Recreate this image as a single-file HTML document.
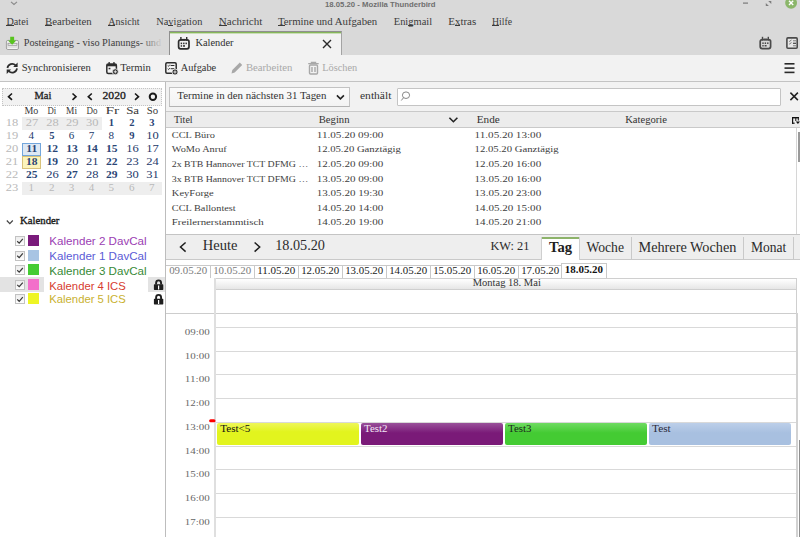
<!DOCTYPE html>
<html><head><meta charset="utf-8"><title>18.05.20 - Mozilla Thunderbird</title>
<style>
html,body{margin:0;padding:0;width:800px;height:537px;overflow:hidden;background:#fff;}
body{position:relative;font-family:"Liberation Serif", serif;}
svg{position:absolute;left:0;top:0;}
</style></head><body>
<div style="position:absolute;left:0px;top:0px;width:800px;height:55px;background:#d9d9d9"></div>
<div style="position:absolute;left:169px;top:31px;width:173px;height:24px;background:#f2f2f2;border-left:1px solid #8f8f8f;border-right:1px solid #a3a3a3;border-top:1px solid #8f8f8f;box-sizing:border-box"></div>
<div style="position:absolute;left:170px;top:32px;width:171px;height:1px;background:#86b65a"></div>
<div style="position:absolute;left:170px;top:33px;width:171px;height:1px;background:#c9ddb6"></div>
<div style="position:absolute;left:0px;top:55px;width:800px;height:27px;background:#f2f2f2"></div>
<div style="position:absolute;left:0px;top:81px;width:800px;height:1px;background:#c3c3c3"></div>
<div style="position:absolute;left:0px;top:82px;width:800px;height:455px;background:#ffffff"></div>
<div style="position:absolute;left:165px;top:82px;width:1px;height:455px;background:#bdbdbd"></div>
<div style="position:absolute;left:166px;top:82px;width:634px;height:29px;background:#f2f2f2"></div>
<div style="position:absolute;left:169px;top:87px;width:181px;height:20px;background:linear-gradient(#fafafa,#f3f3f3);border:1px solid #c2c2c2;border-bottom-color:#b3b3b3;box-sizing:border-box"></div>
<div style="position:absolute;left:397px;top:88px;width:384px;height:18px;background:#fff;border:1px solid #c4c4c4;border-radius:1px;box-sizing:border-box"></div>
<div style="position:absolute;left:166px;top:111px;width:634px;height:17px;background:#ececec;border-top:1px solid #c9c9c9;border-bottom:1px solid #c9c9c9;box-sizing:border-box"></div>
<div style="position:absolute;left:796px;top:128px;width:1px;height:106px;background:#d6d6d6"></div>
<div style="position:absolute;left:798px;top:132px;width:2px;height:30px;background:#9a9a9a"></div>
<div style="position:absolute;left:166px;top:234px;width:634px;height:1px;background:#c4c4c4"></div>
<div style="position:absolute;left:166px;top:235px;width:634px;height:24px;background:#eeeeee"></div>
<div style="position:absolute;left:166px;top:259px;width:634px;height:1px;background:#c9c9c9"></div>
<div style="position:absolute;left:541px;top:237px;width:39px;height:23px;background:#ffffff;border-left:1px solid #cfcfcf;border-right:1px solid #cfcfcf;box-sizing:border-box"></div>
<div style="position:absolute;left:542px;top:237px;width:37px;height:2px;background:#8db36a"></div>
<div style="position:absolute;left:631px;top:237px;width:1px;height:22px;background:#c9c9c9"></div>
<div style="position:absolute;left:743px;top:237px;width:1px;height:22px;background:#c9c9c9"></div>
<div style="position:absolute;left:793px;top:237px;width:1px;height:22px;background:#c9c9c9"></div>
<div style="position:absolute;left:166px;top:265px;width:395px;height:1px;background:#c9c9c9"></div>
<div style="position:absolute;left:210px;top:265px;width:1px;height:13px;background:#c9c9c9"></div>
<div style="position:absolute;left:254px;top:265px;width:1px;height:13px;background:#c9c9c9"></div>
<div style="position:absolute;left:298px;top:265px;width:1px;height:13px;background:#c9c9c9"></div>
<div style="position:absolute;left:342px;top:265px;width:1px;height:13px;background:#c9c9c9"></div>
<div style="position:absolute;left:386px;top:265px;width:1px;height:13px;background:#c9c9c9"></div>
<div style="position:absolute;left:430px;top:265px;width:1px;height:13px;background:#c9c9c9"></div>
<div style="position:absolute;left:474px;top:265px;width:1px;height:13px;background:#c9c9c9"></div>
<div style="position:absolute;left:518px;top:265px;width:1px;height:13px;background:#c9c9c9"></div>
<div style="position:absolute;left:561px;top:263px;width:46px;height:15px;background:#fff;border:1px solid #c9c9c9;border-bottom:none;box-sizing:border-box"></div>
<div style="position:absolute;left:215px;top:278px;width:582px;height:12px;background:linear-gradient(#ffffff,#e6e6e6);border:1px solid #cfcfcf;box-sizing:border-box"></div>
<div style="position:absolute;left:166px;top:313px;width:631px;height:1px;background:#cdcdcd"></div>
<div style="position:absolute;left:796px;top:278px;width:1px;height:259px;background:#cfcfcf"></div>
<div style="position:absolute;left:796px;top:313px;width:2px;height:224px;background:#d2d2d2"></div>
<div style="position:absolute;left:798px;top:313px;width:2px;height:224px;background:#ffffff"></div>
<div style="position:absolute;left:799px;top:440px;width:1px;height:97px;background:#8f8f8f"></div>
<div style="position:absolute;left:214px;top:278px;width:2px;height:259px;background:#dfdfdf"></div>
<div style="position:absolute;left:216px;top:327px;width:580px;height:1px;background:#d9d9d9"></div>
<div style="position:absolute;left:216px;top:351px;width:580px;height:1px;background:#d9d9d9"></div>
<div style="position:absolute;left:216px;top:374px;width:580px;height:1px;background:#d9d9d9"></div>
<div style="position:absolute;left:216px;top:398px;width:580px;height:1px;background:#d9d9d9"></div>
<div style="position:absolute;left:216px;top:422px;width:580px;height:1px;background:#d9d9d9"></div>
<div style="position:absolute;left:216px;top:446px;width:580px;height:1px;background:#d9d9d9"></div>
<div style="position:absolute;left:216px;top:469px;width:580px;height:1px;background:#d9d9d9"></div>
<div style="position:absolute;left:216px;top:493px;width:580px;height:1px;background:#d9d9d9"></div>
<div style="position:absolute;left:216px;top:517px;width:580px;height:1px;background:#d9d9d9"></div>
<div style="position:absolute;left:217px;top:423px;width:142px;height:22px;background:linear-gradient(#eef65a,#e2f41e 40%,#e2f41e);border-radius:2px"></div>
<div style="position:absolute;left:361px;top:423px;width:142px;height:22px;background:linear-gradient(#99519a,#7a1a78 45%,#7a1a78);border-radius:2px"></div>
<div style="position:absolute;left:505px;top:423px;width:142px;height:22px;background:linear-gradient(#6fdb62,#44cb33 45%,#44cb33);border-radius:2px"></div>
<div style="position:absolute;left:649px;top:423px;width:142px;height:22px;background:linear-gradient(#bccfe9,#a8c0e0 45%,#a8c0e0);border-radius:2px"></div>
<div style="position:absolute;left:2px;top:88px;width:160px;height:18px;background:#f2f2f2;border:1px dotted #c4c4c4;box-sizing:border-box"></div>
<div style="position:absolute;left:22px;top:117px;width:80px;height:13px;background:#eeeeee"></div>
<div style="position:absolute;left:22px;top:182px;width:140px;height:13px;background:#eeeeee"></div>
<div style="position:absolute;left:22px;top:143px;width:19px;height:13px;background:#dde8f4;border:1px solid #72a6dc;box-sizing:border-box"></div>
<div style="position:absolute;left:22px;top:156px;width:19px;height:13px;background:#fcf4bb;border:1px solid #d9c27a;box-sizing:border-box"></div>
<div style="position:absolute;left:0px;top:277px;width:44px;height:15px;background:#e3e3e3"></div>
<div style="position:absolute;left:148px;top:277px;width:17px;height:15px;background:#e3e3e3"></div>
<div style="position:absolute;left:15px;top:236px;width:10px;height:10px;background:linear-gradient(#ededed,#fdfdfd);border:1px solid #c2c2c2;box-sizing:border-box"></div>
<div style="position:absolute;left:28px;top:235px;width:11px;height:11px;background:#7a1a7b"></div>
<div style="position:absolute;left:15px;top:251px;width:10px;height:10px;background:linear-gradient(#ededed,#fdfdfd);border:1px solid #c2c2c2;box-sizing:border-box"></div>
<div style="position:absolute;left:28px;top:250px;width:11px;height:11px;background:#a8c4e3"></div>
<div style="position:absolute;left:15px;top:265px;width:10px;height:10px;background:linear-gradient(#ededed,#fdfdfd);border:1px solid #c2c2c2;box-sizing:border-box"></div>
<div style="position:absolute;left:28px;top:264px;width:11px;height:11px;background:#44cc33"></div>
<div style="position:absolute;left:15px;top:280px;width:10px;height:10px;background:linear-gradient(#ededed,#fdfdfd);border:1px solid #c2c2c2;box-sizing:border-box"></div>
<div style="position:absolute;left:28px;top:279px;width:11px;height:11px;background:#f36fca"></div>
<div style="position:absolute;left:15px;top:294px;width:10px;height:10px;background:linear-gradient(#ededed,#fdfdfd);border:1px solid #c2c2c2;box-sizing:border-box"></div>
<div style="position:absolute;left:28px;top:293px;width:11px;height:11px;background:#eef524"></div>
<div style="position:absolute;left:6px;top:25px;width:8px;height:1px;background:#3b3b3b"></div>
<div style="position:absolute;left:45px;top:25px;width:7px;height:1px;background:#3b3b3b"></div>
<div style="position:absolute;left:108px;top:25px;width:7px;height:1px;background:#3b3b3b"></div>
<div style="position:absolute;left:168px;top:25px;width:5px;height:1px;background:#3b3b3b"></div>
<div style="position:absolute;left:219px;top:25px;width:8px;height:1px;background:#3b3b3b"></div>
<div style="position:absolute;left:278px;top:25px;width:7px;height:1px;background:#3b3b3b"></div>
<div style="position:absolute;left:408px;top:25px;width:5px;height:1px;background:#3b3b3b"></div>
<div style="position:absolute;left:455px;top:25px;width:5px;height:1px;background:#3b3b3b"></div>
<div style="position:absolute;left:492px;top:25px;width:7px;height:1px;background:#3b3b3b"></div>
<svg width="800" height="537" viewBox="0 0 800 537">
<defs><linearGradient id="fade" gradientUnits="userSpaceOnUse" x1="140" y1="0" x2="163" y2="0"><stop offset="0" stop-color="#3a3a3a"/><stop offset="1" stop-color="#3a3a3a" stop-opacity="0"/></linearGradient></defs>
<text x="325.00" y="7.00" font-family='"Liberation Sans", sans-serif' font-size="7.92" font-weight="bold" fill="#6f6f6f" textLength="110.62" lengthAdjust="spacingAndGlyphs" >18.05.20 - Mozilla Thunderbird</text>
<text x="6.50" y="24.60" font-family='"Liberation Serif", serif' font-size="9.61" font-weight="normal" fill="#3b3b3b" textLength="21.98" lengthAdjust="spacingAndGlyphs" >Datei</text>
<text x="45.00" y="24.60" font-family='"Liberation Serif", serif' font-size="9.77" font-weight="normal" fill="#3b3b3b" textLength="46.69" lengthAdjust="spacingAndGlyphs" >Bearbeiten</text>
<text x="108.25" y="24.60" font-family='"Liberation Serif", serif' font-size="9.59" font-weight="normal" fill="#3b3b3b" textLength="31.19" lengthAdjust="spacingAndGlyphs" >Ansicht</text>
<text x="156.25" y="24.60" font-family='"Liberation Serif", serif' font-size="9.67" font-weight="normal" fill="#3b3b3b" textLength="46.06" lengthAdjust="spacingAndGlyphs" >Navigation</text>
<text x="218.75" y="24.60" font-family='"Liberation Serif", serif' font-size="9.83" font-weight="normal" fill="#3b3b3b" textLength="43.54" lengthAdjust="spacingAndGlyphs" >Nachricht</text>
<text x="278.00" y="24.60" font-family='"Liberation Serif", serif' font-size="9.78" font-weight="normal" fill="#3b3b3b" textLength="99.21" lengthAdjust="spacingAndGlyphs" >Termine und Aufgaben</text>
<text x="393.75" y="24.60" font-family='"Liberation Serif", serif' font-size="9.69" font-weight="normal" fill="#3b3b3b" textLength="38.35" lengthAdjust="spacingAndGlyphs" >Enigmail</text>
<text x="448.25" y="24.60" font-family='"Liberation Serif", serif' font-size="9.79" font-weight="normal" fill="#3b3b3b" textLength="27.99" lengthAdjust="spacingAndGlyphs" >Extras</text>
<text x="492.00" y="24.60" font-family='"Liberation Serif", serif' font-size="9.53" font-weight="normal" fill="#3b3b3b" textLength="20.10" lengthAdjust="spacingAndGlyphs" >Hilfe</text>
<text x="23.75" y="45.60" font-family='"Liberation Serif", serif' font-size="10.12" font-weight="normal" fill="url(#fade)" textLength="137.30" lengthAdjust="spacingAndGlyphs" >Posteingang - viso Planungs- und</text>
<text x="195.40" y="46.00" font-family='"Liberation Serif", serif' font-size="10.62" font-weight="normal" fill="#2e2e2e" textLength="38.09" lengthAdjust="spacingAndGlyphs" >Kalender</text>
<text x="21.70" y="71.00" font-family='"Liberation Serif", serif' font-size="10.44" font-weight="normal" fill="#303030" textLength="69.08" lengthAdjust="spacingAndGlyphs" >Synchronisieren</text>
<text x="120.20" y="71.00" font-family='"Liberation Serif", serif' font-size="10.44" font-weight="normal" fill="#303030" textLength="30.59" lengthAdjust="spacingAndGlyphs" >Termin</text>
<text x="180.70" y="71.00" font-family='"Liberation Serif", serif' font-size="10.36" font-weight="normal" fill="#303030" textLength="35.47" lengthAdjust="spacingAndGlyphs" >Aufgabe</text>
<text x="245.90" y="71.00" font-family='"Liberation Serif", serif' font-size="10.46" font-weight="normal" fill="#a9a9a9" textLength="46.41" lengthAdjust="spacingAndGlyphs" >Bearbeiten</text>
<text x="322.20" y="71.00" font-family='"Liberation Serif", serif' font-size="10.38" font-weight="normal" fill="#a9a9a9" textLength="35.09" lengthAdjust="spacingAndGlyphs" >Löschen</text>
<text x="34.50" y="98.80" font-family='"Liberation Serif", serif' font-size="9.77" font-weight="normal" fill="#1e1e1e" textLength="16.88" lengthAdjust="spacingAndGlyphs" stroke="#1e1e1e" stroke-width="0.3">Mai</text>
<text x="102.50" y="98.80" font-family='"Liberation Serif", serif' font-size="10.03" font-weight="normal" fill="#1e1e1e" textLength="23.32" lengthAdjust="spacingAndGlyphs" stroke="#1e1e1e" stroke-width="0.3">2020</text>
<text x="24.50" y="113.50" font-family='"Liberation Serif", serif' font-size="9.47" font-weight="normal" fill="#3a3a3a" textLength="13.85" lengthAdjust="spacingAndGlyphs" >Mo</text>
<text x="47.40" y="113.50" font-family='"Liberation Serif", serif' font-size="9.47" font-weight="normal" fill="#3a3a3a" textLength="8.73" lengthAdjust="spacingAndGlyphs" >Di</text>
<text x="66.10" y="113.50" font-family='"Liberation Serif", serif' font-size="9.47" font-weight="normal" fill="#3a3a3a" textLength="10.95" lengthAdjust="spacingAndGlyphs" >Mi</text>
<text x="86.50" y="113.50" font-family='"Liberation Serif", serif' font-size="9.47" font-weight="normal" fill="#3a3a3a" textLength="11.03" lengthAdjust="spacingAndGlyphs" >Do</text>
<text x="105.50" y="113.50" font-family='"Liberation Serif", serif' font-size="9.47" font-weight="normal" fill="#3a3a3a" textLength="13.79" lengthAdjust="spacingAndGlyphs" >Fr</text>
<text x="126.20" y="113.50" font-family='"Liberation Serif", serif' font-size="9.47" font-weight="normal" fill="#3a3a3a" textLength="12.93" lengthAdjust="spacingAndGlyphs" >Sa</text>
<text x="146.80" y="113.50" font-family='"Liberation Serif", serif' font-size="9.47" font-weight="normal" fill="#3a3a3a" textLength="11.41" lengthAdjust="spacingAndGlyphs" >So</text>
<text x="5.67" y="125.70" font-family='"Liberation Serif", serif' font-size="9.62" font-weight="normal" fill="#b9b9b9" textLength="12.50" lengthAdjust="spacingAndGlyphs" >18</text>
<text x="25.77" y="125.70" font-family='"Liberation Serif", serif' font-size="9.62" font-weight="normal" fill="#b9b9b9" textLength="12.50" lengthAdjust="spacingAndGlyphs" >27</text>
<text x="46.27" y="125.70" font-family='"Liberation Serif", serif' font-size="9.62" font-weight="normal" fill="#b9b9b9" textLength="12.50" lengthAdjust="spacingAndGlyphs" >28</text>
<text x="65.97" y="125.70" font-family='"Liberation Serif", serif' font-size="9.62" font-weight="normal" fill="#b9b9b9" textLength="12.50" lengthAdjust="spacingAndGlyphs" >29</text>
<text x="86.07" y="125.70" font-family='"Liberation Serif", serif' font-size="9.62" font-weight="normal" fill="#b9b9b9" textLength="12.50" lengthAdjust="spacingAndGlyphs" >30</text>
<text x="108.65" y="125.70" font-family='"Liberation Serif", serif' font-size="9.62" font-weight="bold" fill="#2a4576" textLength="5.29" lengthAdjust="spacingAndGlyphs" >1</text>
<text x="129.15" y="125.70" font-family='"Liberation Serif", serif' font-size="9.62" font-weight="bold" fill="#2a4576" textLength="5.29" lengthAdjust="spacingAndGlyphs" >2</text>
<text x="149.25" y="125.70" font-family='"Liberation Serif", serif' font-size="9.62" font-weight="bold" fill="#2a4576" textLength="5.29" lengthAdjust="spacingAndGlyphs" >3</text>
<text x="5.67" y="138.75" font-family='"Liberation Serif", serif' font-size="9.62" font-weight="normal" fill="#b9b9b9" textLength="12.50" lengthAdjust="spacingAndGlyphs" >19</text>
<text x="28.53" y="138.75" font-family='"Liberation Serif", serif' font-size="9.62" font-weight="normal" fill="#23386a" textLength="5.53" lengthAdjust="spacingAndGlyphs" >4</text>
<text x="49.15" y="138.75" font-family='"Liberation Serif", serif' font-size="9.62" font-weight="bold" fill="#2a4576" textLength="5.29" lengthAdjust="spacingAndGlyphs" >5</text>
<text x="68.73" y="138.75" font-family='"Liberation Serif", serif' font-size="9.62" font-weight="normal" fill="#23386a" textLength="5.53" lengthAdjust="spacingAndGlyphs" >6</text>
<text x="88.83" y="138.75" font-family='"Liberation Serif", serif' font-size="9.62" font-weight="normal" fill="#23386a" textLength="5.53" lengthAdjust="spacingAndGlyphs" >7</text>
<text x="108.53" y="138.75" font-family='"Liberation Serif", serif' font-size="9.62" font-weight="normal" fill="#23386a" textLength="5.53" lengthAdjust="spacingAndGlyphs" >8</text>
<text x="129.15" y="138.75" font-family='"Liberation Serif", serif' font-size="9.62" font-weight="bold" fill="#2a4576" textLength="5.29" lengthAdjust="spacingAndGlyphs" >9</text>
<text x="146.37" y="138.75" font-family='"Liberation Serif", serif' font-size="9.62" font-weight="normal" fill="#23386a" textLength="12.50" lengthAdjust="spacingAndGlyphs" >10</text>
<text x="5.67" y="151.80" font-family='"Liberation Serif", serif' font-size="9.62" font-weight="normal" fill="#b9b9b9" textLength="12.50" lengthAdjust="spacingAndGlyphs" >20</text>
<text x="26.30" y="151.80" font-family='"Liberation Serif", serif' font-size="9.62" font-weight="bold" fill="#2a4576" textLength="10.91" lengthAdjust="spacingAndGlyphs" >11</text>
<text x="46.51" y="151.80" font-family='"Liberation Serif", serif' font-size="9.62" font-weight="bold" fill="#2a4576" textLength="11.54" lengthAdjust="spacingAndGlyphs" >12</text>
<text x="66.21" y="151.80" font-family='"Liberation Serif", serif' font-size="9.62" font-weight="bold" fill="#2a4576" textLength="11.54" lengthAdjust="spacingAndGlyphs" >13</text>
<text x="86.31" y="151.80" font-family='"Liberation Serif", serif' font-size="9.62" font-weight="bold" fill="#2a4576" textLength="11.54" lengthAdjust="spacingAndGlyphs" >14</text>
<text x="106.01" y="151.80" font-family='"Liberation Serif", serif' font-size="9.62" font-weight="bold" fill="#2a4576" textLength="11.54" lengthAdjust="spacingAndGlyphs" >15</text>
<text x="126.27" y="151.80" font-family='"Liberation Serif", serif' font-size="9.62" font-weight="normal" fill="#23386a" textLength="12.50" lengthAdjust="spacingAndGlyphs" >16</text>
<text x="146.37" y="151.80" font-family='"Liberation Serif", serif' font-size="9.62" font-weight="normal" fill="#23386a" textLength="12.50" lengthAdjust="spacingAndGlyphs" >17</text>
<text x="5.67" y="164.85" font-family='"Liberation Serif", serif' font-size="9.62" font-weight="normal" fill="#b9b9b9" textLength="12.50" lengthAdjust="spacingAndGlyphs" >21</text>
<text x="26.01" y="164.85" font-family='"Liberation Serif", serif' font-size="9.62" font-weight="bold" fill="#2a4576" textLength="11.54" lengthAdjust="spacingAndGlyphs" >18</text>
<text x="46.51" y="164.85" font-family='"Liberation Serif", serif' font-size="9.62" font-weight="bold" fill="#2a4576" textLength="11.54" lengthAdjust="spacingAndGlyphs" >19</text>
<text x="65.97" y="164.85" font-family='"Liberation Serif", serif' font-size="9.62" font-weight="normal" fill="#23386a" textLength="12.50" lengthAdjust="spacingAndGlyphs" >20</text>
<text x="86.07" y="164.85" font-family='"Liberation Serif", serif' font-size="9.62" font-weight="normal" fill="#23386a" textLength="12.50" lengthAdjust="spacingAndGlyphs" >21</text>
<text x="106.01" y="164.85" font-family='"Liberation Serif", serif' font-size="9.62" font-weight="bold" fill="#2a4576" textLength="11.54" lengthAdjust="spacingAndGlyphs" >22</text>
<text x="126.27" y="164.85" font-family='"Liberation Serif", serif' font-size="9.62" font-weight="normal" fill="#23386a" textLength="12.50" lengthAdjust="spacingAndGlyphs" >23</text>
<text x="146.37" y="164.85" font-family='"Liberation Serif", serif' font-size="9.62" font-weight="normal" fill="#23386a" textLength="12.50" lengthAdjust="spacingAndGlyphs" >24</text>
<text x="5.67" y="177.90" font-family='"Liberation Serif", serif' font-size="9.62" font-weight="normal" fill="#b9b9b9" textLength="12.50" lengthAdjust="spacingAndGlyphs" >22</text>
<text x="26.01" y="177.90" font-family='"Liberation Serif", serif' font-size="9.62" font-weight="bold" fill="#2a4576" textLength="11.54" lengthAdjust="spacingAndGlyphs" >25</text>
<text x="46.27" y="177.90" font-family='"Liberation Serif", serif' font-size="9.62" font-weight="normal" fill="#23386a" textLength="12.50" lengthAdjust="spacingAndGlyphs" >26</text>
<text x="66.21" y="177.90" font-family='"Liberation Serif", serif' font-size="9.62" font-weight="bold" fill="#2a4576" textLength="11.54" lengthAdjust="spacingAndGlyphs" >27</text>
<text x="86.07" y="177.90" font-family='"Liberation Serif", serif' font-size="9.62" font-weight="normal" fill="#23386a" textLength="12.50" lengthAdjust="spacingAndGlyphs" >28</text>
<text x="106.01" y="177.90" font-family='"Liberation Serif", serif' font-size="9.62" font-weight="bold" fill="#2a4576" textLength="11.54" lengthAdjust="spacingAndGlyphs" >29</text>
<text x="126.27" y="177.90" font-family='"Liberation Serif", serif' font-size="9.62" font-weight="normal" fill="#23386a" textLength="12.50" lengthAdjust="spacingAndGlyphs" >30</text>
<text x="146.37" y="177.90" font-family='"Liberation Serif", serif' font-size="9.62" font-weight="normal" fill="#23386a" textLength="12.50" lengthAdjust="spacingAndGlyphs" >31</text>
<text x="5.67" y="190.95" font-family='"Liberation Serif", serif' font-size="9.62" font-weight="normal" fill="#b9b9b9" textLength="12.50" lengthAdjust="spacingAndGlyphs" >23</text>
<text x="28.53" y="190.95" font-family='"Liberation Serif", serif' font-size="9.62" font-weight="normal" fill="#b9b9b9" textLength="5.53" lengthAdjust="spacingAndGlyphs" >1</text>
<text x="49.03" y="190.95" font-family='"Liberation Serif", serif' font-size="9.62" font-weight="normal" fill="#b9b9b9" textLength="5.53" lengthAdjust="spacingAndGlyphs" >2</text>
<text x="68.73" y="190.95" font-family='"Liberation Serif", serif' font-size="9.62" font-weight="normal" fill="#b9b9b9" textLength="5.53" lengthAdjust="spacingAndGlyphs" >3</text>
<text x="88.83" y="190.95" font-family='"Liberation Serif", serif' font-size="9.62" font-weight="normal" fill="#b9b9b9" textLength="5.53" lengthAdjust="spacingAndGlyphs" >4</text>
<text x="108.53" y="190.95" font-family='"Liberation Serif", serif' font-size="9.62" font-weight="normal" fill="#b9b9b9" textLength="5.53" lengthAdjust="spacingAndGlyphs" >5</text>
<text x="129.03" y="190.95" font-family='"Liberation Serif", serif' font-size="9.62" font-weight="normal" fill="#b9b9b9" textLength="5.53" lengthAdjust="spacingAndGlyphs" >6</text>
<text x="149.13" y="190.95" font-family='"Liberation Serif", serif' font-size="9.62" font-weight="normal" fill="#b9b9b9" textLength="5.53" lengthAdjust="spacingAndGlyphs" >7</text>
<text x="20.10" y="223.60" font-family='"Liberation Serif", serif' font-size="10.34" font-weight="normal" fill="#1a1a1a" textLength="39.27" lengthAdjust="spacingAndGlyphs" stroke="#1a1a1a" stroke-width="0.35">Kalender</text>
<text x="49.30" y="244.70" font-family='"Liberation Sans", sans-serif' font-size="10.93" font-weight="normal" fill="#9b3db3" textLength="97.32" lengthAdjust="spacingAndGlyphs" >Kalender 2 DavCal</text>
<text x="49.30" y="259.60" font-family='"Liberation Sans", sans-serif' font-size="10.93" font-weight="normal" fill="#5b5bd6" textLength="97.32" lengthAdjust="spacingAndGlyphs" >Kalender 1 DavCal</text>
<text x="49.30" y="274.60" font-family='"Liberation Sans", sans-serif' font-size="10.93" font-weight="normal" fill="#378a37" textLength="97.32" lengthAdjust="spacingAndGlyphs" >Kalender 3 DavCal</text>
<text x="49.30" y="289.60" font-family='"Liberation Sans", sans-serif' font-size="10.86" font-weight="normal" fill="#d63b2f" textLength="76.50" lengthAdjust="spacingAndGlyphs" >Kalender 4 ICS</text>
<text x="49.30" y="302.70" font-family='"Liberation Sans", sans-serif' font-size="10.86" font-weight="normal" fill="#c9b12f" textLength="76.50" lengthAdjust="spacingAndGlyphs" >Kalender 5 ICS</text>
<text x="177.30" y="98.80" font-family='"Liberation Serif", serif' font-size="9.93" font-weight="normal" fill="#333" textLength="149.11" lengthAdjust="spacingAndGlyphs" >Termine in den nächsten 31 Tagen</text>
<text x="360.00" y="98.80" font-family='"Liberation Serif", serif' font-size="10.04" font-weight="normal" fill="#333" textLength="31.38" lengthAdjust="spacingAndGlyphs" >enthält</text>
<text x="174.00" y="122.80" font-family='"Liberation Serif", serif' font-size="9.95" font-weight="normal" fill="#333" textLength="18.64" lengthAdjust="spacingAndGlyphs" >Titel</text>
<text x="318.75" y="122.80" font-family='"Liberation Serif", serif' font-size="10.08" font-weight="normal" fill="#333" textLength="30.77" lengthAdjust="spacingAndGlyphs" >Beginn</text>
<text x="476.75" y="122.80" font-family='"Liberation Serif", serif' font-size="10.18" font-weight="normal" fill="#333" textLength="23.02" lengthAdjust="spacingAndGlyphs" >Ende</text>
<text x="625.20" y="122.80" font-family='"Liberation Serif", serif' font-size="10.08" font-weight="normal" fill="#333" textLength="41.84" lengthAdjust="spacingAndGlyphs" >Kategorie</text>
<text x="171.80" y="137.70" font-family='"Liberation Serif", serif' font-size="9.01" font-weight="normal" fill="#3d3d3d" textLength="43.10" lengthAdjust="spacingAndGlyphs" >CCL Büro</text>
<text x="316.80" y="137.70" font-family='"Liberation Serif", serif' font-size="9.01" font-weight="normal" fill="#3d3d3d" textLength="66.60" lengthAdjust="spacingAndGlyphs" >11.05.20 09:00</text>
<text x="474.60" y="137.70" font-family='"Liberation Serif", serif' font-size="9.01" font-weight="normal" fill="#3d3d3d" textLength="66.60" lengthAdjust="spacingAndGlyphs" >11.05.20 13:00</text>
<text x="171.80" y="152.32" font-family='"Liberation Serif", serif' font-size="9.01" font-weight="normal" fill="#3d3d3d" textLength="54.98" lengthAdjust="spacingAndGlyphs" >WoMo Anruf</text>
<text x="316.80" y="152.32" font-family='"Liberation Serif", serif' font-size="9.01" font-weight="normal" fill="#3d3d3d" textLength="84.04" lengthAdjust="spacingAndGlyphs" >12.05.20 Ganztägig</text>
<text x="474.60" y="152.32" font-family='"Liberation Serif", serif' font-size="9.01" font-weight="normal" fill="#3d3d3d" textLength="84.04" lengthAdjust="spacingAndGlyphs" >12.05.20 Ganztägig</text>
<text x="171.80" y="166.94" font-family='"Liberation Serif", serif' font-size="9.01" font-weight="normal" fill="#3d3d3d" textLength="136.44" lengthAdjust="spacingAndGlyphs" >2x BTB Hannover TCT DFMG …</text>
<text x="316.80" y="166.94" font-family='"Liberation Serif", serif' font-size="9.01" font-weight="normal" fill="#3d3d3d" textLength="66.58" lengthAdjust="spacingAndGlyphs" >12.05.20 09:00</text>
<text x="474.60" y="166.94" font-family='"Liberation Serif", serif' font-size="9.01" font-weight="normal" fill="#3d3d3d" textLength="66.58" lengthAdjust="spacingAndGlyphs" >12.05.20 16:00</text>
<text x="171.80" y="181.56" font-family='"Liberation Serif", serif' font-size="9.01" font-weight="normal" fill="#3d3d3d" textLength="136.44" lengthAdjust="spacingAndGlyphs" >3x BTB Hannover TCT DFMG …</text>
<text x="316.80" y="181.56" font-family='"Liberation Serif", serif' font-size="9.01" font-weight="normal" fill="#3d3d3d" textLength="66.58" lengthAdjust="spacingAndGlyphs" >13.05.20 09:00</text>
<text x="474.60" y="181.56" font-family='"Liberation Serif", serif' font-size="9.01" font-weight="normal" fill="#3d3d3d" textLength="66.58" lengthAdjust="spacingAndGlyphs" >13.05.20 16:00</text>
<text x="171.80" y="196.18" font-family='"Liberation Serif", serif' font-size="9.01" font-weight="normal" fill="#3d3d3d" textLength="41.96" lengthAdjust="spacingAndGlyphs" >KeyForge</text>
<text x="316.80" y="196.18" font-family='"Liberation Serif", serif' font-size="9.01" font-weight="normal" fill="#3d3d3d" textLength="66.58" lengthAdjust="spacingAndGlyphs" >13.05.20 19:30</text>
<text x="474.60" y="196.18" font-family='"Liberation Serif", serif' font-size="9.01" font-weight="normal" fill="#3d3d3d" textLength="66.58" lengthAdjust="spacingAndGlyphs" >13.05.20 23:00</text>
<text x="171.80" y="210.80" font-family='"Liberation Serif", serif' font-size="9.01" font-weight="normal" fill="#3d3d3d" textLength="63.86" lengthAdjust="spacingAndGlyphs" >CCL Ballontest</text>
<text x="316.80" y="210.80" font-family='"Liberation Serif", serif' font-size="9.01" font-weight="normal" fill="#3d3d3d" textLength="66.58" lengthAdjust="spacingAndGlyphs" >14.05.20 14:00</text>
<text x="474.60" y="210.80" font-family='"Liberation Serif", serif' font-size="9.01" font-weight="normal" fill="#3d3d3d" textLength="66.58" lengthAdjust="spacingAndGlyphs" >14.05.20 15:00</text>
<text x="171.80" y="225.42" font-family='"Liberation Serif", serif' font-size="9.01" font-weight="normal" fill="#3d3d3d" textLength="91.97" lengthAdjust="spacingAndGlyphs" >Freilernerstammtisch</text>
<text x="316.80" y="225.42" font-family='"Liberation Serif", serif' font-size="9.01" font-weight="normal" fill="#3d3d3d" textLength="66.58" lengthAdjust="spacingAndGlyphs" >14.05.20 19:00</text>
<text x="474.60" y="225.42" font-family='"Liberation Serif", serif' font-size="9.01" font-weight="normal" fill="#3d3d3d" textLength="66.58" lengthAdjust="spacingAndGlyphs" >14.05.20 21:00</text>
<text x="202.80" y="250.00" font-family='"Liberation Serif", serif' font-size="13.91" font-weight="normal" fill="#2b2b2b" textLength="34.69" lengthAdjust="spacingAndGlyphs" >Heute</text>
<text x="275.20" y="250.00" font-family='"Liberation Serif", serif' font-size="13.85" font-weight="normal" fill="#2b2b2b" textLength="49.76" lengthAdjust="spacingAndGlyphs" >18.05.20</text>
<text x="490.40" y="250.00" font-family='"Liberation Serif", serif' font-size="13.44" font-weight="normal" fill="#2b2b2b" textLength="39.03" lengthAdjust="spacingAndGlyphs" >KW: 21</text>
<text x="549.00" y="252.00" font-family='"Liberation Serif", serif' font-size="13.89" font-weight="bold" fill="#1e1e1e" textLength="22.96" lengthAdjust="spacingAndGlyphs" >Tag</text>
<text x="586.40" y="252.00" font-family='"Liberation Serif", serif' font-size="13.72" font-weight="normal" fill="#2b2b2b" textLength="37.57" lengthAdjust="spacingAndGlyphs" >Woche</text>
<text x="638.50" y="252.00" font-family='"Liberation Serif", serif' font-size="13.86" font-weight="normal" fill="#2b2b2b" textLength="97.89" lengthAdjust="spacingAndGlyphs" >Mehrere Wochen</text>
<text x="751.00" y="252.00" font-family='"Liberation Serif", serif' font-size="13.69" font-weight="normal" fill="#2b2b2b" textLength="35.31" lengthAdjust="spacingAndGlyphs" >Monat</text>
<text x="169.20" y="274.00" font-family='"Liberation Serif", serif' font-size="10.73" font-weight="normal" fill="#7c7c7c" textLength="38.06" lengthAdjust="spacingAndGlyphs" >09.05.20</text>
<text x="213.20" y="274.00" font-family='"Liberation Serif", serif' font-size="10.73" font-weight="normal" fill="#7c7c7c" textLength="38.06" lengthAdjust="spacingAndGlyphs" >10.05.20</text>
<text x="257.20" y="274.00" font-family='"Liberation Serif", serif' font-size="10.76" font-weight="normal" fill="#222" textLength="38.10" lengthAdjust="spacingAndGlyphs" >11.05.20</text>
<text x="301.20" y="274.00" font-family='"Liberation Serif", serif' font-size="10.73" font-weight="normal" fill="#222" textLength="38.06" lengthAdjust="spacingAndGlyphs" >12.05.20</text>
<text x="345.20" y="274.00" font-family='"Liberation Serif", serif' font-size="10.73" font-weight="normal" fill="#222" textLength="38.06" lengthAdjust="spacingAndGlyphs" >13.05.20</text>
<text x="389.20" y="274.00" font-family='"Liberation Serif", serif' font-size="10.73" font-weight="normal" fill="#222" textLength="38.06" lengthAdjust="spacingAndGlyphs" >14.05.20</text>
<text x="433.20" y="274.00" font-family='"Liberation Serif", serif' font-size="10.73" font-weight="normal" fill="#222" textLength="38.06" lengthAdjust="spacingAndGlyphs" >15.05.20</text>
<text x="477.20" y="274.00" font-family='"Liberation Serif", serif' font-size="10.73" font-weight="normal" fill="#222" textLength="38.06" lengthAdjust="spacingAndGlyphs" >16.05.20</text>
<text x="521.20" y="274.00" font-family='"Liberation Serif", serif' font-size="10.73" font-weight="normal" fill="#222" textLength="38.06" lengthAdjust="spacingAndGlyphs" >17.05.20</text>
<text x="564.70" y="273.00" font-family='"Liberation Serif", serif' font-size="10.75" font-weight="bold" fill="#111" textLength="38.40" lengthAdjust="spacingAndGlyphs" >18.05.20</text>
<text x="472.70" y="285.80" font-family='"Liberation Serif", serif' font-size="10.18" font-weight="normal" fill="#333" textLength="68.16" lengthAdjust="spacingAndGlyphs" >Montag 18. Mai</text>
<text x="184.80" y="335.30" font-family='"Liberation Serif", serif' font-size="9.01" font-weight="normal" fill="#666666" textLength="24.99" lengthAdjust="spacingAndGlyphs" >09:00</text>
<text x="184.80" y="359.30" font-family='"Liberation Serif", serif' font-size="9.01" font-weight="normal" fill="#666666" textLength="24.99" lengthAdjust="spacingAndGlyphs" >10:00</text>
<text x="184.80" y="382.30" font-family='"Liberation Serif", serif' font-size="9.01" font-weight="normal" fill="#666666" textLength="25.08" lengthAdjust="spacingAndGlyphs" >11:00</text>
<text x="184.80" y="406.30" font-family='"Liberation Serif", serif' font-size="9.01" font-weight="normal" fill="#666666" textLength="24.99" lengthAdjust="spacingAndGlyphs" >12:00</text>
<text x="184.80" y="430.30" font-family='"Liberation Serif", serif' font-size="9.01" font-weight="normal" fill="#666666" textLength="24.99" lengthAdjust="spacingAndGlyphs" >13:00</text>
<text x="184.80" y="454.30" font-family='"Liberation Serif", serif' font-size="9.01" font-weight="normal" fill="#666666" textLength="24.99" lengthAdjust="spacingAndGlyphs" >14:00</text>
<text x="184.80" y="477.30" font-family='"Liberation Serif", serif' font-size="9.01" font-weight="normal" fill="#666666" textLength="24.99" lengthAdjust="spacingAndGlyphs" >15:00</text>
<text x="184.80" y="501.30" font-family='"Liberation Serif", serif' font-size="9.01" font-weight="normal" fill="#666666" textLength="24.99" lengthAdjust="spacingAndGlyphs" >16:00</text>
<text x="184.80" y="525.30" font-family='"Liberation Serif", serif' font-size="9.01" font-weight="normal" fill="#666666" textLength="24.99" lengthAdjust="spacingAndGlyphs" >17:00</text>
<text x="220.30" y="431.75" font-family='"Liberation Serif", serif' font-size="9.58" font-weight="normal" fill="#111" textLength="30.08" lengthAdjust="spacingAndGlyphs" >Test&lt;5</text>
<text x="364.00" y="431.75" font-family='"Liberation Serif", serif' font-size="9.53" font-weight="normal" fill="#f3e6f6" textLength="23.50" lengthAdjust="spacingAndGlyphs" >Test2</text>
<text x="508.10" y="431.75" font-family='"Liberation Serif", serif' font-size="9.52" font-weight="normal" fill="#1a2a1a" textLength="23.38" lengthAdjust="spacingAndGlyphs" >Test3</text>
<text x="652.00" y="431.75" font-family='"Liberation Serif", serif' font-size="9.59" font-weight="normal" fill="#2a2a3a" textLength="18.72" lengthAdjust="spacingAndGlyphs" >Test</text>
<rect x="209.1" y="419.2" width="6.4" height="3.1" rx="1.55" fill="#ff0000"/>
<polyline points="11,1.9 14,4.4 17,1.9" fill="none" stroke="#8a8a8a" stroke-width="1.2"/>
<rect x="743" y="2.5" width="5" height="1.2" fill="#7a7a7a"/>
<path d="M768.2,0.9 L771.3,0.9 L771.3,4 Z M765.8,2.9 L765.8,6 L768.9,6 Z" fill="#7d7d7d"/>
<circle cx="791.1" cy="2.9" r="5.9" fill="#8bb66a"/><path d="M789,0.8 L793.2,5 M793.2,0.8 L789,5" stroke="#fff" stroke-width="1.4"/>
<rect x="6.4" y="40.4" width="12.1" height="9.1" rx="1.5" fill="#f4f4f4" stroke="#a0a0a0" stroke-width="1"/>
<rect x="8" y="43.3" width="9" height="2" fill="none" stroke="#9a9a9a" stroke-width="0.9"/><path d="M7,47 h11" stroke="#c8c8c8" stroke-width="0.8"/>
<path d="M10.2,36.7 h3.9 v3.8 h2.2 l-4.15,4.2 l-4.15,-4.2 h2.2 z" fill="#58c41f"/>
<g transform="translate(177.8,37.0) scale(1.0)"><rect x="0.8" y="2.8" width="10.4" height="9" rx="2" fill="none" stroke="#2d2d2d" stroke-width="1.7"/><rect x="2.4" y="0" width="1.4" height="3.8" fill="#2d2d2d"/><rect x="8.2" y="0" width="1.4" height="3.8" fill="#2d2d2d"/><rect x="4.4" y="1.9" width="3.2" height="1.6" fill="#2d2d2d"/><rect x="2.9" y="5.6" width="1.4" height="1.6" fill="#2d2d2d"/><rect x="5.3" y="5.6" width="1.4" height="1.6" fill="#2d2d2d"/><rect x="7.7" y="5.6" width="1.4" height="1.6" fill="#2d2d2d"/><rect x="2.9" y="8.2" width="1.4" height="1.5" fill="#2d2d2d"/><rect x="5.2" y="8.2" width="2" height="1.5" fill="#2d2d2d"/></g>
<path d="M323,40 L331,48 M331,40 L323,48" stroke="#2a2a2a" stroke-width="1.4"/>
<g transform="translate(759.4,36.8) scale(1.0)"><rect x="0.8" y="2.8" width="10.4" height="9" rx="2" fill="none" stroke="#4a4a4a" stroke-width="1.7"/><rect x="2.4" y="0" width="1.4" height="3.8" fill="#4a4a4a"/><rect x="8.2" y="0" width="1.4" height="3.8" fill="#4a4a4a"/><rect x="4.4" y="1.9" width="3.2" height="1.6" fill="#4a4a4a"/><rect x="2.9" y="5.6" width="1.4" height="1.6" fill="#4a4a4a"/><rect x="5.3" y="5.6" width="1.4" height="1.6" fill="#4a4a4a"/><rect x="7.7" y="5.6" width="1.4" height="1.6" fill="#4a4a4a"/><rect x="2.9" y="8.2" width="1.4" height="1.5" fill="#4a4a4a"/><rect x="5.2" y="8.2" width="2" height="1.5" fill="#4a4a4a"/></g>
<rect x="786.9" y="37.9" width="10.3" height="10.3" rx="1" fill="#e6e6e6" stroke="#4a4a4a" stroke-width="1.6"/><path d="M789.2,41.6 l2.3,-1.6 M789.2,44.2 l2.3,-1.6" stroke="#777" stroke-width="1"/><rect x="793" y="40.2" width="3" height="1.1" fill="#888"/><rect x="793" y="42.7" width="3" height="1.2" fill="#444"/><rect x="793" y="45.2" width="3" height="1.1" fill="#888"/>
<g fill="none" stroke="#2d2d2d" stroke-width="1.7"><path d="M7.4,68 A4.8,4.8 0 0 1 15.6,65.4"/><path d="M17,68.4 A4.8,4.8 0 0 1 8.8,71.2"/></g><path d="M13.2,66.9 L17.6,66.9 L17.6,62.5 Z" fill="#2d2d2d"/><path d="M6.7,69.5 L11.1,69.5 L6.7,73.9 Z" fill="#2d2d2d"/>
<g transform="translate(106,62)"><rect x="0.8" y="2" width="9.6" height="9.4" rx="1.5" fill="none" stroke="#2d2d2d" stroke-width="1.5"/><rect x="0.8" y="2" width="9.6" height="2.3" fill="#2d2d2d"/><rect x="2.5" y="0" width="1.3" height="2.6" fill="#2d2d2d"/><rect x="7.3" y="0" width="1.3" height="2.6" fill="#2d2d2d"/><rect x="2.6" y="5.8" width="1.8" height="1.5" fill="#2d2d2d"/><circle cx="9.3" cy="9.8" r="3" fill="#2d2d2d" stroke="#f2f2f2" stroke-width="0.8"/><path d="M9.3,8.2 v3.2 M7.7,9.8 h3.2" stroke="#f2f2f2" stroke-width="0.9"/></g>
<g transform="translate(165,62)"><rect x="0.8" y="0.8" width="10.4" height="10.4" rx="1.2" fill="none" stroke="#2d2d2d" stroke-width="1.5"/><path d="M2.7,3.5 l0.8,0.8 l1.3,-1.6 M2.7,6.8 l0.8,0.8 l1.3,-1.6" fill="none" stroke="#2d2d2d" stroke-width="0.9"/><rect x="5.6" y="3" width="3.8" height="1" fill="#2d2d2d"/><rect x="5.6" y="6.2" width="3.8" height="1" fill="#2d2d2d"/><circle cx="10" cy="10" r="3" fill="#2d2d2d" stroke="#f2f2f2" stroke-width="0.8"/><path d="M10,8.4 v3.2 M8.4,10 h3.2" stroke="#f2f2f2" stroke-width="0.9"/></g>
<path d="M231.5,73.5 L232.3,70 L239.8,62.5 L242.2,64.9 L234.7,72.4 Z" fill="#a8a8a8"/>
<g fill="none" stroke="#a8a8a8" stroke-width="1.4"><rect x="309.5" y="65" width="8" height="9" rx="1"/><path d="M308.2,63.6 h10.5 M311.5,63.6 v-1.2 h4 v1.2 M312,67 v5 M315,67 v5"/></g>
<g fill="#2a2a2a"><rect x="784.5" y="63" width="10" height="1.6"/><rect x="784.5" y="67.3" width="10" height="1.6"/><rect x="784.5" y="71.6" width="10" height="1.6"/></g>
<polyline points="12,93.5 8.5,96.65 12,99.8" fill="none" stroke="#1a1a1a" stroke-width="1.6"/>
<polyline points="72.5,93.5 76,96.65 72.5,99.8" fill="none" stroke="#1a1a1a" stroke-width="1.6"/>
<polyline points="91.8,93.5 88.3,96.65 91.8,99.8" fill="none" stroke="#1a1a1a" stroke-width="1.6"/>
<polyline points="135,93.5 138.5,96.65 135,99.8" fill="none" stroke="#1a1a1a" stroke-width="1.6"/>
<circle cx="152.9" cy="96.8" r="3.2" fill="none" stroke="#1a1a1a" stroke-width="2"/>
<polyline points="6.8,220.5 9.8,223.7 12.8,220.5" fill="none" stroke="#444" stroke-width="1.2"/>
<polyline points="17.2,241.2 19.2,243.1 22.8,238.9" fill="none" stroke="#3a3a3a" stroke-width="1.2"/>
<polyline points="17.2,255.75 19.2,257.65000000000003 22.8,253.45000000000002" fill="none" stroke="#3a3a3a" stroke-width="1.2"/>
<polyline points="17.2,270.3 19.2,272.20000000000005 22.8,268.0" fill="none" stroke="#3a3a3a" stroke-width="1.2"/>
<polyline points="17.2,284.84999999999997 19.2,286.75 22.8,282.54999999999995" fill="none" stroke="#3a3a3a" stroke-width="1.2"/>
<polyline points="17.2,299.4 19.2,301.3 22.8,297.09999999999997" fill="none" stroke="#3a3a3a" stroke-width="1.2"/>
<g transform="translate(153.7,279.3)"><path d="M2.4,5.2 V3.6 A2.5,2.5 0 0 1 7.4,3.6 V5.2" fill="none" stroke="#1e1e1e" stroke-width="1.9"/><rect x="0.2" y="5" width="9.4" height="5.6" rx="0.6" fill="#1e1e1e"/><rect x="4.3" y="6.2" width="1.2" height="4" fill="#fff"/></g>
<g transform="translate(153.7,293.8)"><path d="M2.4,5.2 V3.6 A2.5,2.5 0 0 1 7.4,3.6 V5.2" fill="none" stroke="#1e1e1e" stroke-width="1.9"/><rect x="0.2" y="5" width="9.4" height="5.6" rx="0.6" fill="#1e1e1e"/><rect x="4.3" y="6.2" width="1.2" height="4" fill="#fff"/></g>
<polyline points="336.9,95.4 340.4,98.8 343.9,95.4" fill="none" stroke="#222" stroke-width="1.6"/>
<g fill="none" stroke="#7a7a7a" stroke-width="0.9"><ellipse cx="406" cy="95.2" rx="3.6" ry="3.3"/><path d="M403.6,97.6 L401.3,100.5"/></g>
<path d="M790.4,92.6 L797.9,100.1 M797.9,92.6 L790.4,100.1" stroke="#222" stroke-width="1.5"/>
<polyline points="449.4,117.7 453.4,121.7 457.4,117.7" fill="none" stroke="#222" stroke-width="1.6"/>
<g fill="#111"><rect x="792" y="117" width="6.8" height="1.4"/><rect x="792" y="117" width="1.2" height="6.8"/><rect x="792" y="122.6" width="2.6" height="1.2"/><rect x="795.3" y="117" width="1" height="4"/><rect x="797.8" y="117" width="1" height="3.5"/><path d="M795.8,121.5 L800,121.5 L797.9,123.9 Z"/></g>
<polyline points="185.6,242.5 180.5,247.05 185.6,251.6" fill="none" stroke="#1e1e1e" stroke-width="1.5"/>
<polyline points="254.6,242.5 259.7,247.05 254.6,251.6" fill="none" stroke="#1e1e1e" stroke-width="1.5"/>
</svg>
</body></html>
